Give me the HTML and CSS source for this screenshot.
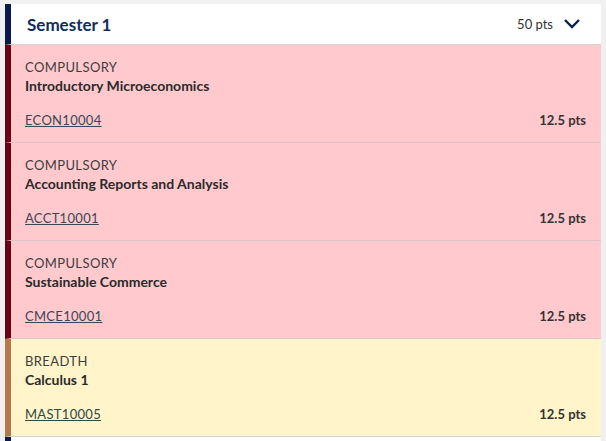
FILE: index.html
```html
<!DOCTYPE html>
<html lang="en">
<head>
    <meta charset="UTF-8">
    <meta name="viewport" content="width=device-width, initial-scale=1.0">
    <title>Course plan</title>
    <link rel="stylesheet" href="styles.css">
</head>
<body>

    <!-- Semester 1 -->
    <section class="semester">
        <div class="semester-header">
            <h2>Semester 1</h2>
            <div class="semester-meta">
                <span class="semester-pts">50 pts</span>
                <svg class="chevron" width="18" height="12" viewBox="0 0 18 12">
                    <path d="M2 2 L9 9 L16 2" fill="none" stroke="#0a2150" stroke-width="2.4"/>
                </svg>
            </div>
        </div>

        <div class="subject compulsory">
            <div class="subject-type">COMPULSORY</div>
            <div class="subject-name">Introductory Microeconomics</div>
            <div class="subject-foot">
                <a href="#" class="subject-code">ECON10004</a>
                <span class="subject-pts">12.5 pts</span>
            </div>
        </div>

        <div class="subject compulsory">
            <div class="subject-type">COMPULSORY</div>
            <div class="subject-name">Accounting Reports and Analysis</div>
            <div class="subject-foot">
                <a href="#" class="subject-code">ACCT10001</a>
                <span class="subject-pts">12.5 pts</span>
            </div>
        </div>

        <div class="subject compulsory">
            <div class="subject-type">COMPULSORY</div>
            <div class="subject-name">Sustainable Commerce</div>
            <div class="subject-foot">
                <a href="#" class="subject-code">CMCE10001</a>
                <span class="subject-pts">12.5 pts</span>
            </div>
        </div>

        <div class="subject breadth">
            <div class="subject-type">BREADTH</div>
            <div class="subject-name">Calculus 1</div>
            <div class="subject-foot">
                <a href="#" class="subject-code">MAST10005</a>
                <span class="subject-pts">12.5 pts</span>
            </div>
        </div>
    </section>

    <!-- next semester, only its top edge shows -->
    <section class="semester">
        <div class="semester-header"></div>
    </section>

</body>
</html>
```

FILE: styles.css
```css
* {
  margin: 0;
  padding: 0;
  box-sizing: border-box;
}

body {
  background-color: #f0f0f0;
  font-family: Lato, "Open Sans", sans-serif;
  color: #2b2b2b;
  padding: 4px 5px 0 5px;
}

.semester {
  background: #fff;
}

.semester-header {
  display: flex;
  justify-content: space-between;
  align-items: center;
  height: 41px;
  padding: 0 20px 0 16px;
  border-left: 6px solid #0a1a4a;
  border-bottom: 1px solid #d4d4d4;
}

.semester-header h2 {
  font-size: 17px;
  font-weight: 700;
  color: #0f2d5c;
}

.semester-meta {
  display: flex;
  align-items: center;
  gap: 10px;
}

.semester-pts {
  font-size: 13px;
  color: #333;
}

.chevron {
  display: block;
}

.subject {
  height: 98px;
  padding: 14px 15px 0 14px;
  border-left: 6px solid #6e0015;
  border-bottom: 1px solid #dcc4c6;
}

.compulsory {
  background-color: #ffc9cd;
}

.breadth {
  background-color: #fff4ca;
  border-left-color: #b8774a;
  border-bottom-color: #d4d4d4;
}

.subject-type {
  font-size: 13px;
  letter-spacing: 0.4px;
  color: #3d3d3d;
  line-height: 17px;
}

.subject-name {
  font-size: 14px;
  font-weight: 700;
  color: #2b2b2b;
  line-height: 20px;
}

.subject-foot {
  display: flex;
  justify-content: space-between;
  align-items: center;
  margin-top: 16px;
}

.subject-code {
  font-size: 13px;
  letter-spacing: 0.3px;
  color: #3b4656;
  text-decoration: underline;
}

.breadth .subject-code {
  color: #2d4a44;
}

.subject-pts {
  font-size: 13px;
  font-weight: 700;
  color: #333;
}
```
